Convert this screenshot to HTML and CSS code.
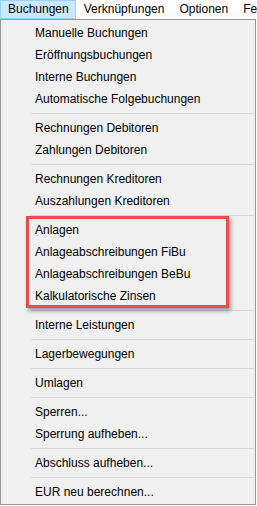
FILE: index.html
```html
<!DOCTYPE html>
<html lang="de">
<head>
<meta charset="utf-8">
<title>Buchungen</title>
<link rel="stylesheet" href="styles.css">
</head>
<body>
<div class="menubar">
	<span class="menubar-item active">Buchungen</span>
	<span class="menubar-item">Verknüpfungen</span>
	<span class="menubar-item">Optionen</span>
	<span class="menubar-item">Fenster</span>
</div>
<div class="menu">
	<div class="menu-item">Manuelle Buchungen</div>
	<div class="menu-item">Eröffnungsbuchungen</div>
	<div class="menu-item">Interne Buchungen</div>
	<div class="menu-item">Automatische Folgebuchungen</div>
	<div class="menu-sep"></div>
	<div class="menu-item">Rechnungen Debitoren</div>
	<div class="menu-item">Zahlungen Debitoren</div>
	<div class="menu-sep"></div>
	<div class="menu-item">Rechnungen Kreditoren</div>
	<div class="menu-item">Auszahlungen Kreditoren</div>
	<div class="menu-sep"></div>
	<div class="menu-group marked">
		<div class="menu-item">Anlagen</div>
		<div class="menu-item">Anlageabschreibungen FiBu</div>
		<div class="menu-item">Anlageabschreibungen BeBu</div>
		<div class="menu-item">Kalkulatorische Zinsen</div>
	</div>
	<div class="menu-sep"></div>
	<div class="menu-item">Interne Leistungen</div>
	<div class="menu-sep"></div>
	<div class="menu-item">Lagerbewegungen</div>
	<div class="menu-sep"></div>
	<div class="menu-item">Umlagen</div>
	<div class="menu-sep"></div>
	<div class="menu-item">Sperren...</div>
	<div class="menu-item">Sperrung aufheben...</div>
	<div class="menu-sep"></div>
	<div class="menu-item">Abschluss aufheben...</div>
	<div class="menu-sep"></div>
	<div class="menu-item">EUR neu berechnen...</div>
</div>
</body>
</html>
```

FILE: styles.css
```css
body{ margin:0; padding:0; background:#fff; font-family:"Liberation Sans", Arial, sans-serif; font-size:12px; color:#000; overflow:hidden;}
.menubar{ display:flex; height:19px; line-height:17px; white-space:nowrap; overflow:hidden; background:#fff;}
.menubar-item{ padding:0 6px 0 7px; border:1px solid transparent;}
.menubar-item.active{ background:#cce8ff; border-color:#99d1ff;}
.menu{ width:254px; border:1px solid #979797; background:#f0f0f0; padding:2px 0 1px 0;}
.menu-item{ height:22px; line-height:22px; padding-left:34px; white-space:nowrap;}
.menu-sep{ height:1px; margin:3px 1px 3px 30px; background:#d7d7d7;}
.menu-group{ position:relative;}
/* rote Markierung liegt über den Einträgen */
.marked:after{ content:""; position:absolute; left:25px; right:26px; top:-3px; bottom:-1px; border:3px solid #ef4a4a; box-shadow:2px 3px 4px rgba(0,0,0,.35);}
```
